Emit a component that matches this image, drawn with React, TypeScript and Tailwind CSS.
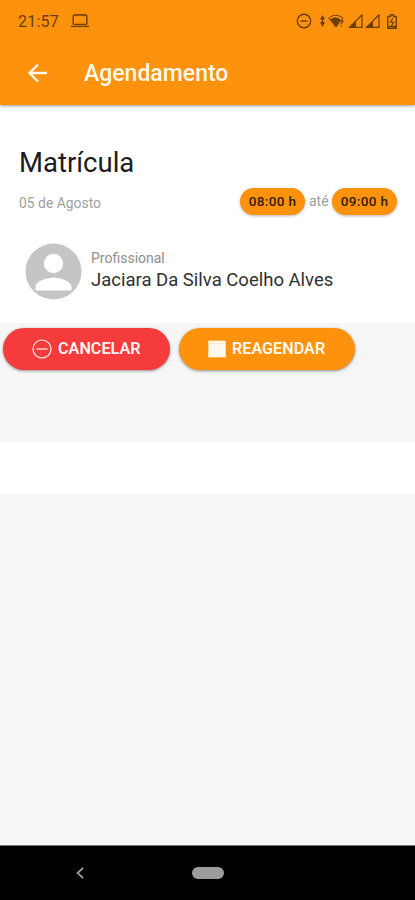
import type { ReactNode } from "react";

function StatusBar() {
  return (
    <div className="flex h-[42px] items-center pl-[18px] pr-[18px] text-[#6b3d08]">
      <span className="pt-[2px] text-[16px] leading-none tracking-[0.2px]">21:57</span>
      <svg className="ml-[12px]" width="18" height="14" viewBox="0 0 18 14" fill="none" stroke="currentColor" strokeWidth="1.4">
        <rect x="2.2" y="1" width="13.6" height="9.4" rx="1" />
        <path d="M0 12.4h18" />
      </svg>
      <div className="ml-auto flex items-center">
        <svg width="16" height="16" viewBox="0 0 16 16" fill="none" stroke="currentColor" strokeWidth="1.4">
          <circle cx="8" cy="8" r="6.7" />
          <path d="M4.6 8h6.8" />
        </svg>
        <svg className="ml-[8px]" width="5" height="12" viewBox="0 0 5 12" fill="currentColor">
          <path d="M2.5 0 5 4.5H0zM2.5 12 5 7H0z" />
          <path d="M1.8 4h1.4v4H1.8z" />
        </svg>
        <svg className="ml-[3px]" width="17" height="14" viewBox="0 0 17 14">
          <path d="M.8 4.2C5 .3 10.5 .3 15 4.2L8 13z" fill="none" stroke="currentColor" strokeWidth="1" />
          <path d="M2.2 5.2C6 2.8 10 2.8 12.5 5.5L8 13z" fill="currentColor" />
          <path d="M12.2 7.2q2-1.5 2.7 0 0 1.3-1.5 2v1M13.4 11.5v1.3" fill="none" stroke="currentColor" strokeWidth="1.2" />
        </svg>
        {[0, 1].map((i) => (
          <svg key={i} className="ml-[2.5px]" width="15" height="14" viewBox="0 0 15 14">
            <path d="M1.5 13.3H14V.8z" fill="none" stroke="currentColor" strokeWidth="1.2" />
            <path d="M1 13.5h7V7z" fill="currentColor" />
          </svg>
        ))}
        <svg className="ml-[7px]" width="10" height="15" viewBox="0 0 10 15" fill="none" stroke="currentColor" strokeWidth="1.4">
          <path d="M.8 2.5h2.7V.8h3v1.700h2.700v11.700H.8z" />
          <path d="M5.8 4.2 3.5 8h3L4.5 11.800" strokeWidth="1.2" />
          <path d="M1 12.5h8" strokeWidth="1.6" />
        </svg>
      </div>
    </div>
  );
}

function TimeBadge({ children }: { children: ReactNode }) {
  return (
    <span className="flex h-[27px] w-[65px] items-center justify-center whitespace-nowrap rounded-full bg-[#ff920d] text-[13.5px] font-medium tracking-[0.35px] text-[#302006] shadow-[0_1px_3px_rgba(0,0,0,0.28)]">
      {children}
    </span>
  );
}

export default function App() {
  return (
    <div className="flex h-[900px] w-[415px] flex-col overflow-hidden bg-[#f6f6f6] font-[Roboto,sans-serif]">
      <header className="z-10 h-[105px] shrink-0 bg-[#ff920d] shadow-[0_1px_3px_rgba(0,0,0,0.4)]">
        <StatusBar />
        <div className="flex h-[62px] items-center pl-[28px] text-[#fff8ec]">
          <svg width="20" height="20" viewBox="0 0 20 20" fill="none" stroke="currentColor" strokeWidth="2.3">
            <path d="M19 10H2M10 1.5 1.5 10l8.500 8.500" />
          </svg>
          <h1 className="ml-[36px] text-[23px] font-medium leading-none">Agendamento</h1>
        </div>
      </header>

      <section className="h-[218px] shrink-0 bg-white pl-[19px] pr-[18px] pt-[41px]">
        <h2 className="text-[27.5px] leading-[34px] text-[#1c1c1c]">Matrícula</h2>
        <div className="mt-[8px] flex h-[27px] items-center">
          <span className="pt-[3px] text-[13.9px] text-[#a0a0a0]">05 de Agosto</span>
          <div className="ml-auto flex items-center gap-[4px]">
            <TimeBadge>08:00 h</TimeBadge>
            <span className="w-[19px] text-center text-[14px] text-[#a0a0a0]">até</span>
            <TimeBadge>09:00 h</TimeBadge>
          </div>
        </div>
        <div className="mt-[28px] flex pl-[6px]">
          <svg width="57" height="57" viewBox="0 0 57 57">
            <circle cx="28.5" cy="28.5" r="28" fill="#c5c5c5" />
            <circle cx="28.5" cy="20.5" r="9.7" fill="#fff" />
            <path d="M10.5 47.5v-3.500c0-6 12-9.500 18-9.500s18 3.500 18 9.500v3.500z" fill="#fff" />
          </svg>
          <div className="ml-[9px] pt-[6px]">
            <p className="text-[14px] leading-[18px] text-[#8e8e8e]">Profissional</p>
            <p className="mt-[2px] whitespace-nowrap text-[18.5px] leading-[22px] text-[#303030]">Jaciara Da Silva Coelho Alves</p>
          </div>
        </div>
      </section>

      <div className="flex h-[119px] shrink-0 gap-[9px] pl-[3px] pt-[5px]">
        <button className="flex h-[42px] w-[167px] items-center rounded-full bg-[#f63b3d] pl-[29px] text-[16.2px] font-semibold text-[#fff3f3] shadow-[0_1px_3px_rgba(0,0,0,0.42)]">
          <svg width="20" height="20" viewBox="0 0 20 20" fill="none" stroke="currentColor" strokeWidth="1.2">
            <circle cx="10" cy="10" r="9" />
            <path d="M4.5 10h11" />
          </svg>
          <span className="ml-[6px]">CANCELAR</span>
        </button>
        <button className="flex h-[42px] w-[176px] items-center rounded-full bg-[#ff920d] pl-[29px] text-[16.2px] font-semibold text-[#fff8ec] shadow-[0_1px_3px_rgba(0,0,0,0.42)]">
          <svg width="18" height="18" viewBox="0 0 18 18">
            <path d="M.3 .7h17.400v16.600H.3z" fill="currentColor" />
            <path d="M1 3.500h16" stroke="#ffe2bb" strokeWidth=".8" />
            <path d="M4 .3v2M14 .3v2" stroke="#ffd49c" strokeWidth="1" />
          </svg>
          <span className="ml-[6px]">REAGENDAR</span>
        </button>
      </div>

      <div className="h-[52px] shrink-0 bg-white" />
      <main className="flex-1" />

      <nav className="flex h-[55px] shrink-0 items-center border-t border-[#777] bg-black pl-[76px]">
        <svg width="8" height="12" viewBox="0 0 8 12" fill="none" stroke="#9d9d9d" strokeWidth="1.7">
          <path d="M7 1 1.5 6 7 11" />
        </svg>
        <span className="ml-[108px] h-[12px] w-[32px] rounded-full bg-[#9d9d9d]" />
      </nav>
    </div>
  );
}
